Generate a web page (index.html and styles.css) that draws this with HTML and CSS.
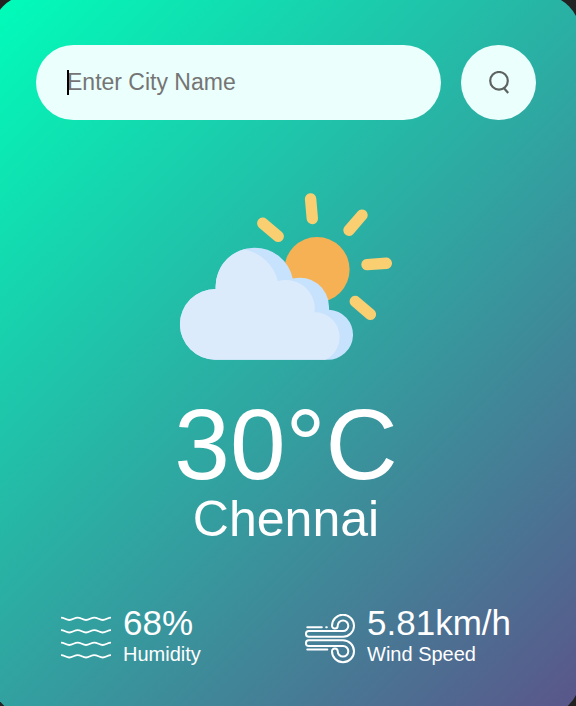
FILE: index.html
```html
<!DOCTYPE html>
<html lang="en">
<head>
  <meta charset="utf-8">
  <meta name="viewport" content="width=device-width, initial-scale=1">
  <title>Weather</title>
  <link rel="stylesheet" href="styles.css">
</head>
<body>
  <main class="card">
    <form class="search">
      <div class="search-field">
        <input class="search-input" type="text" placeholder="Enter City Name" aria-label="City name" spellcheck="false" autocomplete="off">
      </div>
      <button class="search-button" type="button" aria-label="Search">
        <svg width="24" height="24" viewBox="0 0 24 24" fill="none" stroke="#5c6361" stroke-width="2.2">
          <circle cx="12" cy="9.8" r="8.8"/>
          <path d="M16.6 16.8 21.2 22"/>
        </svg>
      </button>
    </form>

    <section class="weather">
      <svg class="weather-icon" width="212" height="168" viewBox="0 0 212 168" aria-hidden="true">
        <g stroke="#facf71" stroke-width="11.4" stroke-linecap="round">
          <path d="M130.6 5.9 132.3 25.5M182 22.1 169 37.2M187 71.6 206.3 70.2M175.3 108.5 190.4 121.3M82.8 30.3 98.2 43.3"/>
        </g>
        <circle cx="137" cy="76.6" r="32.6" fill="#f6b154"/>
        <path fill="#c7e2fc" d="M35.3 166.7A35.3 35.3 0 0 1 35.3 96H35.6V93.5A38.8 38.8 0 0 1 74.3 54.7A38.8 38.8 0 0 1 112.8 85.6A29 29 0 0 1 149 113.7V116.7A25 25 0 0 1 147 166.7Z"/>
        <path fill="#dcebfb" d="M35.3 166.7A35.3 35.3 0 0 1 35.3 96H35.6V93.5A38.8 38.8 0 0 1 64 56.2A44 44 0 0 1 98 88.2A28.6 28.6 0 0 1 134.5 119.2A25 25 0 0 1 145.5 166.7Z"/>
      </svg>
      <h1 class="temp">30°C</h1>
      <h2 class="city">Chennai</h2>
    </section>

    <section class="details">
      <div class="detail">
        <svg width="50" height="50" viewBox="0 0 50 50" fill="none" stroke="#fff" stroke-width="1.8" aria-hidden="true">
          <defs>
            <path id="wave" d="M0 -1.2C3.3 -1.2 5 1.2 8.3 1.2S13.4 -1.2 16.7 -1.2 21.7 1.2 25 1.2 30 -1.2 33.3 -1.2 38.4 1.2 41.7 1.2 46.7 -1.2 50 -1.2"/>
          </defs>
          <use href="#wave" y="4.8"/>
          <use href="#wave" y="17.3"/>
          <use href="#wave" y="29.8"/>
          <use href="#wave" y="42.3"/>
        </svg>
        <div>
          <p class="value">68%</p>
          <p class="label">Humidity</p>
        </div>
      </div>
      <div class="detail">
        <svg width="50" height="50" viewBox="0 0 50 50" fill="none" stroke="#fff" stroke-width="2" stroke-linecap="round" aria-hidden="true">
          <defs>
            <path id="gust" d="M38 17H3.8a2.85 2.85 0 0 0 0 5.7H38A11 11 0 1 0 27 11.7a2.85 2.85 0 0 0 5.7 0A5.3 5.3 0 1 1 38 17Z"/>
          </defs>
          <use href="#gust"/>
          <use href="#gust" transform="translate(0 49) scale(1 -1)"/>
          <path d="M2.3 13.3H16.8M21.2 13.3H21.8M2.3 35.6H22.3"/>
        </svg>
        <div>
          <p class="value">5.81km/h</p>
          <p class="label">Wind Speed</p>
        </div>
      </div>
    </section>
  </main>
</body>
</html>
```
FILE: styles.css
```css
* {
  box-sizing: border-box;
  margin: 0;
  padding: 0;
}

body {
  overflow: hidden;
  background: #222;
  color: #fff;
  font-family: "Liberation Sans", Arial, sans-serif;
}

/* The card bleeds slightly past every window edge. */
.card {
  min-height: calc(100vh + 15px);
  margin: -5px -4px -10px -8px;
  padding: 50px 44px;
  border-radius: 38px;
  background: linear-gradient(135deg, #00feba, #5b548a);
}

.search {
  display: flex;
  gap: 20px;
}

.search-field {
  position: relative;
  flex: 1;
}

.search-field::before {
  content: "";
  position: absolute;
  top: 25px;
  left: 31px;
  width: 2px;
  height: 25px;
  background: #000;
}

.search-input {
  display: block;
  width: 100%;
  height: 75px;
  padding: 0 31px;
  border: 0;
  outline: 0;
  border-radius: 38px;
  background: #ebfffc;
  color: #555;
  font: 23px "Liberation Sans", Arial, sans-serif;
}

.search-input::placeholder {
  color: #757575;
}

.search-button {
  display: flex;
  align-items: center;
  justify-content: center;
  width: 75px;
  height: 75px;
  border: 0;
  border-radius: 50%;
  background: #ebfffc;
  cursor: pointer;
}

.weather {
  display: flex;
  flex-direction: column;
  align-items: center;
  margin-top: 73px;
}

.weather-icon {
  margin-bottom: 33px;
}

.temp {
  font-size: 100px;
  font-weight: 400;
  line-height: 100px;
}

.city {
  font-size: 50px;
  font-weight: 400;
  line-height: 50px;
}

.details {
  display: flex;
  justify-content: space-between;
  margin-top: 58px;
  padding: 0 25px;
}

.detail {
  display: flex;
  align-items: flex-end;
  gap: 12px;
}

.value {
  font-size: 35px;
  line-height: 42px;
}

.label {
  font-size: 20px;
  line-height: 20px;
}
```
